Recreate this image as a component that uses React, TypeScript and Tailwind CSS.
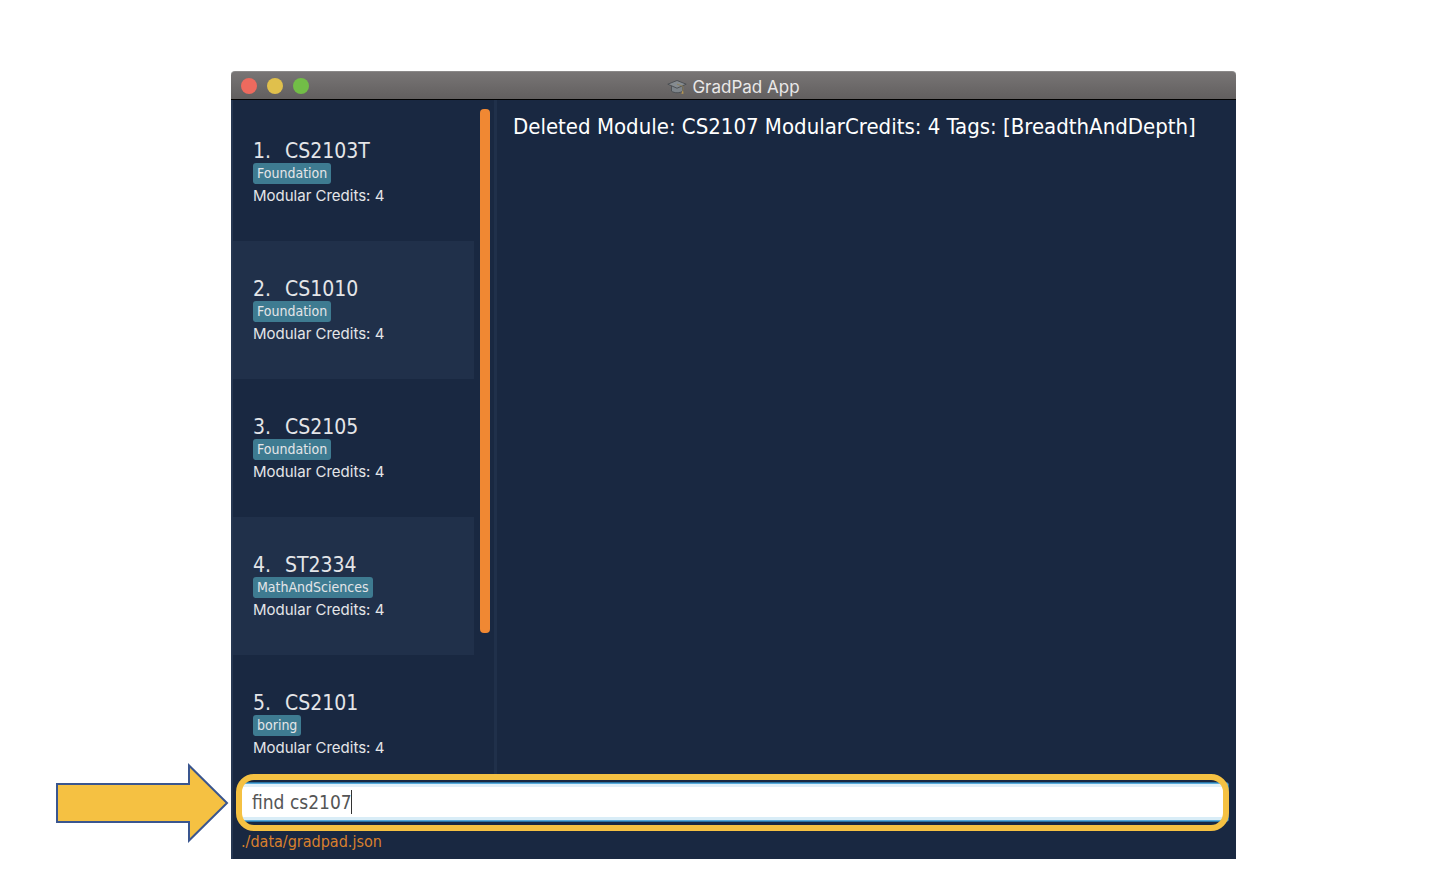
import { useState } from "react";

interface Module {
  code: string;
  tag: string;
  credits: number;
}

const modules: Module[] = [
  { code: "CS2103T", tag: "Foundation", credits: 4 },
  { code: "CS1010", tag: "Foundation", credits: 4 },
  { code: "CS2105", tag: "Foundation", credits: 4 },
  { code: "ST2334", tag: "MathAndSciences", credits: 4 },
  { code: "CS2101", tag: "boring", credits: 4 },
];

function CapIcon() {
  return (
    <svg viewBox="0 0 20 16" className="h-4 w-5" aria-hidden="true">
      <path d="M4.500 6.500v5.600c2.600 2.200 8.600 2.200 11.200 0V6.500z" fill="#7d848a" stroke="#4a4f53" strokeWidth="0.9" />
      <path d="M10 1.500 19.200 5.200 10 9.200.8 5.200z" fill="#858b90" stroke="#484c50" strokeWidth="0.9" strokeLinejoin="round" />
      <path d="M10 5.200 16 7.200v4" fill="none" stroke="#8d8059" strokeWidth="0.900" />
      <path d="M16 10.500 14.300 14.800h2.200z" fill="#b69752" />
    </svg>
  );
}

function TitleBar() {
  return (
    <header className="relative flex h-[29px] items-center justify-center rounded-t-[4px] border-t border-b border-t-[#8b8989] border-b-black bg-linear-to-b from-[#787575] to-[#625f5f]">
      <div className="absolute left-[10px] flex gap-[10px]">
        <button aria-label="Close" className="size-4 rounded-full bg-[#ed6a5e]" />
        <button aria-label="Minimize" className="size-4 rounded-full bg-[#e0c04c]" />
        <button aria-label="Zoom" className="size-4 rounded-full bg-[#72be47]" />
      </div>
      <h1 className="flex items-center gap-[5px] pt-[2px] font-['Inter',sans-serif] text-[17px] leading-6 text-[#e9e8e8]">
        <CapIcon />
        GradPad App
      </h1>
    </header>
  );
}

function ModuleCard({ module, index }: { module: Module; index: number }) {
  return (
    <li className="h-[138px] pt-9 pl-5 even:bg-[#20304a]">
      <h2 className="flex text-[21px] leading-6">
        <span className="w-8">{index}.</span>
        {module.code}
      </h2>
      <div className="flex">
        <span className="rounded-[3px] bg-[#3e7b91] px-1 text-sm leading-[21px]">{module.tag}</span>
      </div>
      <p className="font-['Inter',sans-serif] text-[15px] leading-6">Modular Credits: {module.credits}</p>
    </li>
  );
}

function CalloutArrow() {
  return (
    <svg viewBox="0 0 174 80" className="absolute top-[-11px] left-[-181px] h-20 w-[174px]" aria-hidden="true">
      <path d="M2 21H134V2.500L172 40 134 77.500V59H2z" fill="#f5c142" stroke="#3a568f" strokeWidth="2" />
    </svg>
  );
}

export default function App() {
  const [command, setCommand] = useState("find cs2107");
  return (
    <main className="min-h-screen bg-white pt-[71px] pr-[218px] pb-[27px] pl-[231px] font-['DejaVu_Sans_Condensed','DejaVu_Sans',sans-serif]">
      <TitleBar />
      <div className="border-l-2 border-[#263752] bg-[#192841] text-[#e4e5e8]">
        <div className="flex h-[674px] overflow-hidden">
          <section aria-label="Modules" className="flex w-[264px] shrink-0 border-r-3 border-[#20304a] pt-[3px]">
            <ol className="flex-1">
              {modules.map((module, i) => (
                <ModuleCard key={module.code} module={module} index={i + 1} />
              ))}
            </ol>
            <div className="mt-[6px] mr-1 ml-[6px] h-[524px] w-[10px] rounded-[4px] bg-[#f08833]" />
          </section>
          <output className="flex-1 pt-3 pl-4 text-[22px] leading-[30px] whitespace-nowrap text-white">
            Deleted Module: CS2107 ModularCredits: 4 Tags: [BreadthAndDepth]
          </output>
        </div>
        <div className="relative mr-[7px] ml-[3px] pt-2 pb-[9px] pl-1">
          <CalloutArrow />
          <input
            aria-label="Command"
            value={command}
            onChange={(e) => setCommand(e.target.value)}
            className="block h-10 w-full rounded-[3px] border border-[#2b74a4] bg-white px-[11px] text-[19px] text-[#555555] caret-[#333333] shadow-[inset_0_0_0_1px_#57aadb,inset_0_4px_0_#e2f0f8,inset_0_-4px_0_#d9edf7] outline-none"
          />
          <div className="pointer-events-none absolute inset-0 rounded-[18px] border-6 border-[#f5c142]" />
          <span className="absolute top-4 left-[115px] h-6 w-px bg-[#333333]" />
        </div>
        <footer className="pb-[6px] pl-2 text-base leading-[22px] text-[#d9802d]">./data/gradpad.json</footer>
      </div>
    </main>
  );
}
